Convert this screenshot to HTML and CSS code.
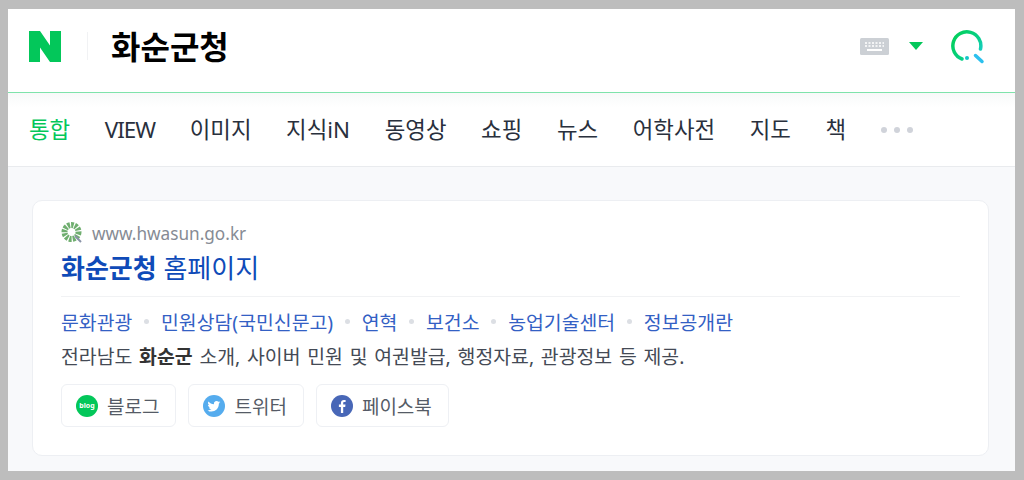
FILE: index.html
```html
<!DOCTYPE html>
<html lang="ko">
  <head>
    <meta charset="UTF-8" />
    <title>화순군청</title>
    <link rel="stylesheet" href="styles.css">
  </head>
  <body>
    <div class="frame">
      <!-- search bar -->
      <header class="search-bar">
        <svg class="logo" width="32" height="31" viewBox="0 0 32 31">
          <path d="M0 0h11l10 14.500V0h11v31H21L11 16.500V31H0z" fill="#03c75a" />
        </svg>
        <span class="divider"></span>
        <h1 class="query">화순군청</h1>
        <svg class="keyboard" width="29" height="17" viewBox="0 0 29 17">
          <rect width="29" height="17" rx="1.500" fill="#ccd0d5" />
          <path d="M5 5h19M5 8h19" stroke="#fff" stroke-width="1.500" stroke-dasharray="2 1.500" />
          <path d="M7 12h15" stroke="#fff" stroke-width="2" />
        </svg>
        <span class="arrow"></span>
        <svg class="search" width="36" height="36" viewBox="0 0 36 36" fill="none">
          <defs>
            <linearGradient id="sg" gradientUnits="userSpaceOnUse" x1="3" y1="10" x2="32" y2="30">
              <stop offset="0" stop-color="#03cf5d" />
              <stop offset=".6" stop-color="#08d08a" />
              <stop offset="1" stop-color="#1fcbe0" />
            </linearGradient>
          </defs>
          <path d="M12 31A14 14 0 1 1 30.500 21" stroke="url(#sg)" stroke-width="3.500" stroke-linecap="round" />
          <path d="M25.500 27.500l6.500 6" stroke="#2cc0ee" stroke-width="3.500" stroke-linecap="round" />
          <circle cx="17" cy="30" r="2" fill="#13c6c8" />
        </svg>
      </header>

      <!-- tabs -->
      <nav class="tabs">
        <a class="tab active">통합</a>
        <a class="tab tab-view">VIEW</a>
        <a class="tab">이미지</a>
        <a class="tab">지식iN</a>
        <a class="tab">동영상</a>
        <a class="tab">쇼핑</a>
        <a class="tab">뉴스</a>
        <a class="tab">어학사전</a>
        <a class="tab">지도</a>
        <a class="tab">책</a>
        <span class="more"><i></i><i></i><i></i></span>
      </nav>

      <!-- result -->
      <main class="content">
        <section class="card">
          <div class="site">
            <svg class="favicon" width="24" height="24" viewBox="0 0 24 24" fill="none">
              <circle cx="11.500" cy="11" r="7" stroke="#6fae6f" stroke-width="6" stroke-dasharray="2.500 1.100" />
              <path d="M15 15l6 6" stroke="#8a93a8" stroke-width="2" />
            </svg>
            <span class="url">www.hwasun.go.kr</span>
          </div>
          <h2 class="title"><b>화순군청</b> 홈페이지</h2>
          <div class="links">
            <a>문화관광</a><span class="dot"></span>
            <a>민원상담(국민신문고)</a><span class="dot"></span>
            <a>연혁</a><span class="dot"></span>
            <a>보건소</a><span class="dot"></span>
            <a>농업기술센터</a><span class="dot"></span>
            <a>정보공개란</a>
          </div>
          <p class="desc">전라남도 <b>화순군</b> 소개, 사이버 민원 및 여권발급, 행정자료, 관광정보 등 제공.</p>
          <div class="sns">
            <a class="sns-btn">
              <span class="sns-icon blog">blog</span>블로그
            </a>
            <a class="sns-btn">
              <svg class="sns-icon" width="22" height="22" viewBox="0 0 22 22">
                <circle cx="11" cy="11" r="11" fill="#55acee" />
                <path d="M17.500 7.200c-.500.200-1 .400-1.500.400.500-.300 1-.800 1.200-1.400-.500.300-1.100.500-1.700.600a2.700 2.700 0 0 0-4.600 2.400c-2.200-.100-4.200-1.200-5.500-2.800-.700 1.200-.400 2.800.800 3.600-.400 0-.800-.100-1.200-.300 0 1.300.900 2.400 2.100 2.700-.400.100-.800.100-1.200 0 .300 1.100 1.300 1.800 2.500 1.900-1.100.900-2.500 1.200-3.900 1.100 4.800 3 11.400.100 11.400-6.800.500-.400 1-.800 1.300-1.400z" fill="#fff" />
              </svg>
              트위터
            </a>
            <a class="sns-btn">
              <svg class="sns-icon" width="22" height="22" viewBox="0 0 22 22">
                <circle cx="11" cy="11" r="11" fill="#4867b7" />
                <path d="M12.200 18v-6h2l.300-2.400h-2.300V8.200c0-.700.200-1.100 1.200-1.100h1.200V5c-.200 0-.900-.100-1.700-.100-1.800 0-3 1.100-3 3v1.700h-2V12h2v6z" fill="#fff" />
              </svg>
              페이스북
            </a>
          </div>
        </section>
      </main>
    </div>
  </body>
</html>
```

FILE: styles.css
```css
* {
  box-sizing: border-box;
}

html,
body {
  margin: 0;
  height: 100%;
}

body {
  background: #bdbdbd;
  padding: 9px 9px 9px 8px;
  font-family: "Noto Sans", "Noto Sans CJK KR", sans-serif;
  overflow: hidden;
}

.frame {
  height: 462px;
  background: #f8f9fb;
  overflow: hidden;
}

h1,
h2,
p {
  margin: 0;
}

.search-bar {
  height: 84px;
  background: #fff;
  border-bottom: 1px solid #7fe3ab;
  display: flex;
  align-items: center;
  padding: 0 29px 0 21px;
}

.logo {
  margin-top: -9px;
}

.divider {
  width: 1px;
  height: 28px;
  margin: -9px 23px 0 26px;
  background: #f1f2f4;
}

.query {
  font-size: 32px;
  font-weight: 700;
  color: #000;
  line-height: 40px;
  margin-top: -8px;
  flex: 1;
}

.keyboard {
  margin-top: -9px;
}

.arrow {
  width: 0;
  height: 0;
  margin: -9px 27px 0 20px;
  border-left: 7px solid transparent;
  border-right: 7px solid transparent;
  border-top: 8px solid #03c75a;
}

.search {
  margin-top: -9px;
}

.tabs {
  height: 74px;
  background: linear-gradient(#f8f9f9, #fff 14px);
  border-bottom: 1px solid #e9ebee;
  display: flex;
  align-items: center;
  padding: 0 0 0 21px;
  gap: 34.600px;
  font-size: 22.400px;
  color: #29303d;
}

.tab {
  line-height: 28px;
}

.tab.active {
  color: #03c75a;
}

.tab-view {
  letter-spacing: -1px;
}

.more {
  display: flex;
  gap: 6.500px;
  margin-top: 1px;
}

.more i {
  width: 6.500px;
  height: 6.500px;
  border-radius: 50%;
  background: #d0d3da;
}

.content {
  padding: 33px 26px 0 24px;
}

.card {
  height: 256px;
  background: #fff;
  border: 1px solid #edeff3;
  border-radius: 10px;
  padding: 16px 28px 0 28px;
}

.site {
  display: flex;
  align-items: center;
  gap: 8px;
  height: 32px;
}

.favicon {
  margin-left: -1px;
}

.url {
  font-size: 17.200px;
  color: #868b94;
}

.title {
  font-size: 26px;
  font-weight: 400;
  color: #0f4bb8;
  line-height: 38px;
  height: 48px;
  border-bottom: 1px solid #f1f2f4;
}

.links {
  display: flex;
  align-items: center;
  gap: 11.800px;
  height: 26px;
  margin-top: 11px;
  font-size: 19.400px;
  color: #3360c4;
}

.dot {
  width: 5px;
  height: 5px;
  border-radius: 50%;
  background: #dcdfe4;
}

.desc {
  margin-top: 10px;
  font-size: 19.400px;
  line-height: 26px;
  word-spacing: 1.700px;
  color: #444a55;
}

.desc b {
  color: #333;
}

.sns {
  display: flex;
  gap: 12px;
  margin-top: 14px;
}

.sns-btn {
  height: 43px;
  display: flex;
  align-items: center;
  gap: 9px;
  padding: 0 16px 0 14px;
  background: #fff;
  border: 1px solid #eef0f4;
  border-radius: 6px;
  font-size: 19px;
  color: #555b66;
}

.sns-icon {
  flex: none;
}

.blog {
  width: 22px;
  height: 22px;
  border-radius: 50%;
  background: #03c75a;
  color: #fff;
  font-size: 7px;
  font-weight: 700;
  text-align: center;
  line-height: 22px;
}
```
